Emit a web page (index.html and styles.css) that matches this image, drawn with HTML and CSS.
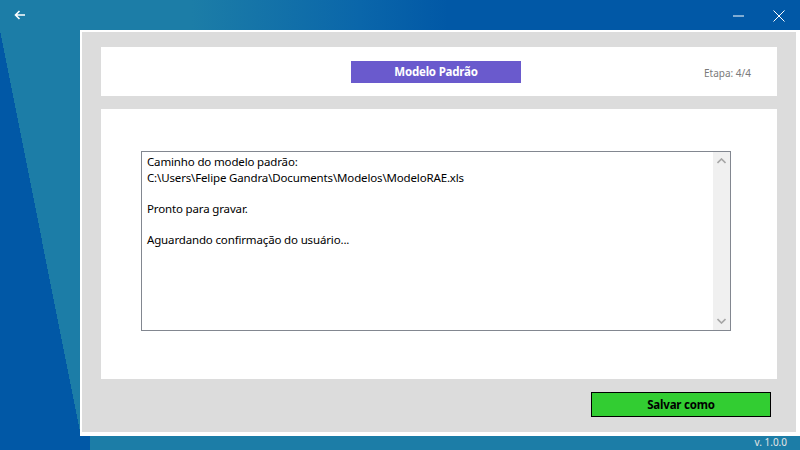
FILE: index.html
```html
<!DOCTYPE html>
<html lang="pt-BR">
<head>
<meta charset="utf-8">
<title>Modelo Padrão</title>
<link rel="stylesheet" href="styles.css">
</head>
<body>
<div class="screen">
  <div class="titlebar">
    <svg class="icon-back" width="12" height="10" viewBox="0 0 12 10"><path d="M5.5 1 L1.5 5 L5.5 9 M1.5 5 H11" fill="none" stroke="#ffffff" stroke-width="1.6"/></svg>
    <div class="spacer"></div>
    <svg class="icon-min" width="11" height="2" viewBox="0 0 11 2"><path d="M0 1 H11" stroke="#ffffff" stroke-width="1"/></svg>
    <svg class="icon-close" width="12" height="12" viewBox="0 0 12 12"><path d="M0.5 0.5 L11.5 11.5 M11.5 0.5 L0.5 11.5" stroke="#ffffff" stroke-width="1"/></svg>
  </div>
  <div class="window">
    <div class="panel header">
      <div></div>
      <div class="title">Modelo Padrão</div>
      <div class="step">Etapa: 4/4</div>
    </div>
    <div class="panel content">
      <div class="log">
        <div class="log-text">Caminho do modelo padrão:
C:\Users\Felipe Gandra\Documents\Modelos\ModeloRAE.xls

Pronto para gravar.

Aguardando confirmação do usuário...</div>
        <div class="scrollbar">
          <svg width="9" height="6" viewBox="0 0 9 6"><path d="M0.5 5 L4.5 1 L8.5 5" fill="none" stroke="#a6a6a6" stroke-width="1.6"/></svg>
          <svg width="9" height="6" viewBox="0 0 9 6"><path d="M0.5 1 L4.5 5 L8.5 1" fill="none" stroke="#a6a6a6" stroke-width="1.6"/></svg>
        </div>
      </div>
    </div>
    <div class="actions">
      <button class="save">Salvar como</button>
    </div>
  </div>
  <div class="statusbar">v. 1.0.0</div>
</div>
</body>
</html>
```
FILE: styles.css
```css
* { box-sizing: border-box; }
html, body { margin: 0; padding: 0; }
body {
  width: 800px;
  height: 450px;
  overflow: hidden;
  font-family: "Noto Sans", "Open Sans", "DejaVu Sans", sans-serif;
}
.screen {
  width: 800px;
  height: 450px;
  display: flex;
  flex-direction: column;
  background-color: #1c7da7;
  background-image:
    linear-gradient(to bottom left, transparent 50%, #0158a6 50%),
    linear-gradient(#0158a6, #0158a6),
    linear-gradient(to right, #1c7da7 24%, #0a66aa 45%, #0158a6 56%);
  background-size: 84px 422px, 90px 14px, 100% 30px;
  background-position: 0 30px, 0 436px, 0 0;
  background-repeat: no-repeat;
}
.titlebar {
  height: 30px;
  display: flex;
  align-items: center;
  padding: 0 15px 0 14px;
}
.icon-back { display: block; }
.spacer { flex: 1; }
.icon-min { display: block; margin-right: 29px; margin-top: 1px; }
.icon-close { display: block; margin-top: 1px; }
.window {
  margin-left: 80px;
  width: 720px;
  height: 406px;
  background: #dcdcdc;
  border-style: solid;
  border-color: #ffffff;
  border-width: 2px 4px 4px 2px;
  padding: 15px 19px 0 19px;
  display: flex;
  flex-direction: column;
  gap: 13px;
}
.panel { background: #ffffff; }
.header {
  height: 49px;
  display: grid;
  grid-template-columns: 1fr 170px 1fr;
  align-items: center;
}
.title {
  height: 22px;
  background: #6a5acd;
  color: #ffffff;
  font-weight: bold;
  font-size: 11.5px;
  letter-spacing: -0.2px;
  line-height: 22px;
  text-align: center;
  transform: translateX(-3px);
}
.step {
  justify-self: end;
  margin-right: 26px;
  font-size: 10px;
  color: #7a7a7a;
  margin-top: 3px;
}
.content {
  height: 270px;
  padding: 42px 46px 0 40px;
}
.log {
  height: 180px;
  border: 1px solid #828790;
  display: flex;
}
.log-text {
  flex: 1;
  white-space: pre-wrap;
  font-size: 11.5px;
  letter-spacing: -0.15px;
  line-height: 15.5px;
  color: #000000;
  padding: 2px 5px;
}
.scrollbar {
  width: 17px;
  background: #f0f0f0;
  display: flex;
  flex-direction: column;
  justify-content: space-between;
  align-items: center;
  padding: 6px 0 6px 0;
}
.scrollbar svg { display: block; }
.actions {
  display: flex;
  justify-content: flex-end;
  padding-right: 6px;
}
.save {
  width: 180px;
  height: 25px;
  background: #32cd32;
  border: 1px solid #000000;
  color: #000000;
  font-family: "Noto Sans", "Open Sans", sans-serif;
  font-weight: bold;
  font-size: 11.5px;
  letter-spacing: -0.2px;
  padding: 0;
  margin: 0;
}
.statusbar {
  height: 14px;
  text-align: right;
  padding-right: 13px;
  font-size: 10px;
  line-height: 12px;
  color: #e6e6e6;
}
```
